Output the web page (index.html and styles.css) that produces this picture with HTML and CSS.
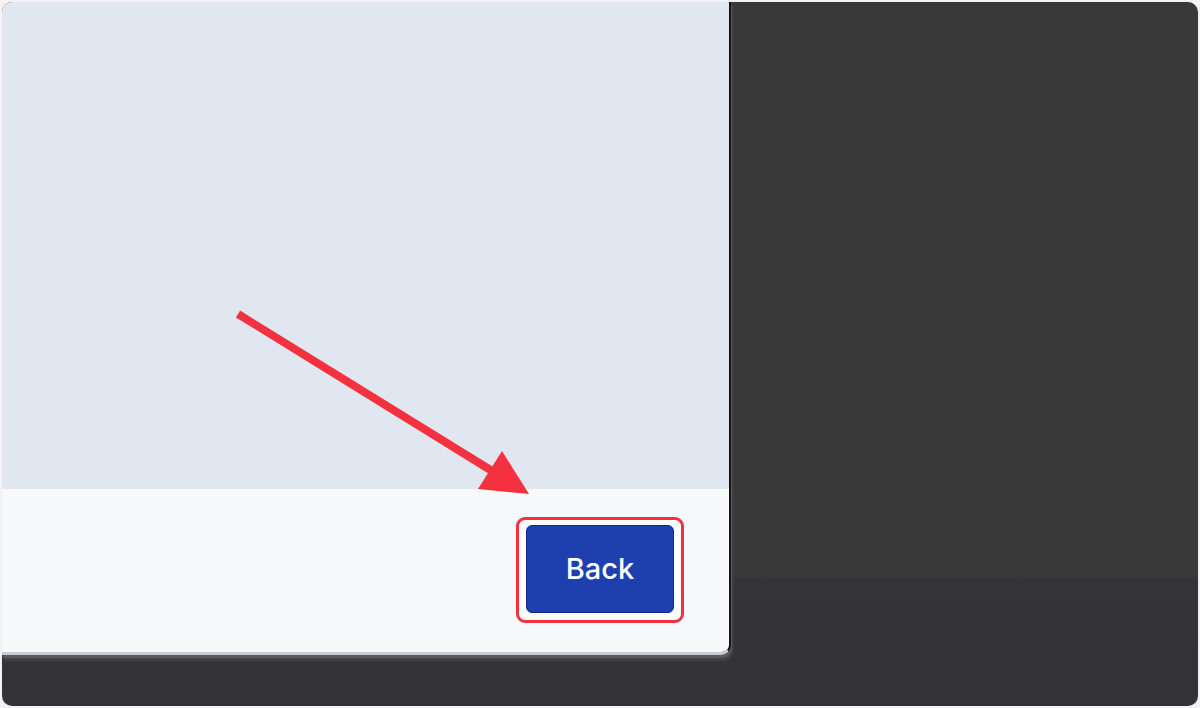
FILE: index.html
```html
<!DOCTYPE html>
<html lang="en">
<head>
    <meta charset="UTF-8">
    <meta name="viewport" content="width=device-width, initial-scale=1.0">
    <title>Back</title>
    <link rel="stylesheet" href="styles.css">
</head>
<body>
    <div class="frame">
        <div class="panel">
            <div class="panel-body"></div>
            <div class="panel-footer">
                <div class="highlight">
                    <button class="btn-back" type="button">Back</button>
                </div>
            </div>
        </div>
        <div class="backdrop"></div>
    </div>

    <svg class="arrow" width="1200" height="708" viewBox="0 0 1200 708">
        <line x1="238" y1="314" x2="497" y2="474" stroke="#f4313f" stroke-width="8"></line>
        <polygon points="529,494 478,489 502,451" fill="#f4313f"></polygon>
    </svg>
</body>
</html>
```

FILE: styles.css
```css
:root {
    --frame-bg: #383838;
    --panel-bg: #e1e7f0;
    --footer-bg: #f7f9fb;
    --primary-color: #1e3fae;
    --mark-color: #f4313f;
}

html, body {
    height: 100%;
}

body {
    margin: 0;
    padding: 2px;
    box-sizing: border-box;
    background-color: #f3f2f7;
    font-family: 'Liberation Sans', Arial, sans-serif;
}

.frame {
    height: 100%;
    display: flex;
    border-radius: 10px;
    overflow: hidden;
    background: linear-gradient(to bottom, #393939 0, #393939 576px, #353537 576px, #333335 100%);
}

.panel {
    width: 727px;
    height: 650px;
    display: flex;
    flex-direction: column;
    border-right: 2px solid #141414;
    border-bottom: 3px solid #c3ccd8;
    border-bottom-right-radius: 10px;
    box-shadow: 1px 3px 0 #5a5a5c, 2px 6px 2px #454547;
    overflow: hidden;
}

.panel-body {
    flex: 0 0 487px;
    background-color: var(--panel-bg);
}

.panel-footer {
    flex: 1;
    display: flex;
    justify-content: flex-end;
    align-items: center;
    padding-right: 45px;
    background-color: var(--footer-bg);
}

.highlight {
    padding: 5px 7px 7px;
    border: 3px solid var(--mark-color);
    border-radius: 9px;
    background-color: #ffffff;
    margin-top: -2px;
}

.btn-back {
    display: block;
    width: 148px;
    height: 88px;
    border: 1px solid #0d2a94;
    border-radius: 6px;
    background-color: var(--primary-color);
    color: #ffffff;
    font-family: Inter, 'Liberation Sans', sans-serif;
    font-weight: 500;
    font-size: 29px;
    padding: 0;
    cursor: pointer;
}

.backdrop {
    flex: 1;
}

.arrow {
    position: absolute;
    top: 0;
    left: 0;
    pointer-events: none;
}
```
